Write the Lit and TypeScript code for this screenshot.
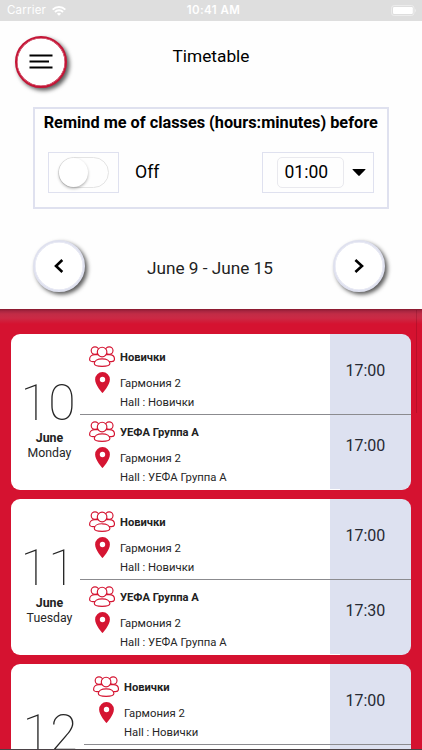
import { LitElement, html, svg, css } from "lit";
import { customElement, property } from "lit/decorators.js";
import { classMap } from "lit/directives/class-map.js";

interface Lesson {
  group: string;
  place: string;
  hall: string;
  time: string;
}
interface Day {
  date: string;
  month: string;
  weekday: string;
  wide?: boolean;
  lessons: Lesson[];
}

const lesson = (group: string, time: string): Lesson => ({
  group,
  place: "Гармония 2",
  hall: `Hall : ${group}`,
  time,
});

const DAYS: Day[] = [
  { date: "10", month: "June", weekday: "Monday", lessons: [lesson("Новички", "17:00"), lesson("УЕФА Группа А", "17:00")] },
  { date: "11", month: "June", weekday: "Tuesday", lessons: [lesson("Новички", "17:00"), lesson("УЕФА Группа А", "17:30")] },
  { date: "12", month: "June", weekday: "Wednesday", wide: true, lessons: [lesson("Новички", "17:00")] },
];

const people = svg`
  <circle cx="6" cy="4.6" r="3.8"/><circle cx="20.2" cy="4.6" r="3.8"/>
  <path d="M6.6 15.6H3.6C1.4 15.6.6 14.6.6 13.2.6 10.6 2.8 8.6 6 8.6H20.2C23.4 8.6 25.5 10.6 25.5 13.2 25.5 14.6 24.7 15.6 22.5 15.6H19.5"/>
  <circle cx="13.1" cy="6" r="4.8"/>
  <path d="M13.1 12.8C17.9 12.8 20.9 14.9 20.9 17.6 20.9 19.6 18.9 20.4 13.1 20.4S5.3 19.6 5.3 17.6C5.3 14.9 8.3 12.8 13.1 12.8Z"/>`;

@customElement("day-card")
class DayCard extends LitElement {
  @property({ attribute: false }) day!: Day;

  static styles = css`
    :host { display: block; }
    .card {
      position: relative;
      display: flex;
      height: 155.5px;
      border-radius: 9px;
      background: linear-gradient(90deg, #fff 319px, #dde1f0 319px);
      color: #262626;
    }
    .card::after {
      content: "";
      position: absolute;
      left: 309px;
      bottom: -0.5px;
      width: 20px;
      height: 1px;
      background: #fff;
    }
    .date {
      width: 69px;
      flex: none;
      box-sizing: border-box;
      padding: 40px 0 0 9px;
      display: flex;
      flex-direction: column;
      align-items: center;
      white-space: nowrap;
    }
    .wide .date { width: 73px; }
    .num { font-size: 50px; line-height: 58px; font-weight: 100; letter-spacing: 0.5px; margin-right: 2.5px; }
    .month { font-size: 12.4px; line-height: 14px; font-weight: 700; color: #222; margin: -1px 0 1px; }
    .week { font-size: 12.3px; line-height: 15px; }
    .list { flex: 1; min-width: 0; }
    .row {
      height: 75px;
      box-sizing: border-box;
      display: flex;
      padding-left: 9.5px;
    }
    .row:first-child { height: 80.5px; padding-top: 5.5px; border-bottom: 1px solid #8b8b8f; }
    .icons { width: 26px; margin-right: 5px; display: flex; flex-direction: column; align-items: center; padding-top: 6.5px; gap: 4.5px; }
    .icons svg { display: block; flex: none; }
    .text { flex: 1; font-size: 11.3px; white-space: nowrap; }
    .group { font-size: 11.2px; font-weight: 700; line-height: 14px; margin-top: 11px; color: #222; }
    .place { line-height: 14px; margin-top: 12px; }
    .hall { line-height: 14px; margin-top: 5px; }
    .time { width: 65.5px; font-size: 16px; line-height: 20px; padding-top: 21px; color: #262a33; }
  `;

  render() {
    const d = this.day;
    return html`<div class=${classMap({ card: true, wide: !!d.wide })}>
      <div class="date">
        <div class="num">${d.date}</div>
        <div class="month">${d.month}</div>
        <div class="week">${d.weekday}</div>
      </div>
      <div class="list">
        ${d.lessons.map(
          (l) => html`<div class="row">
            <div class="icons">
              <svg width="26" height="21" viewBox="0 0 26 21" fill="#fff" stroke="#d51532" stroke-width="1.15">${people}</svg>
              <svg width="15" height="21" viewBox="0 0 15 21"><path fill="#d51532" fill-rule="evenodd" d="M7.5 0A7.4 7.4 0 0 0 .1 7.4C.1 13 7.5 21 7.5 21S14.9 13 14.9 7.4A7.4 7.4 0 0 0 7.5 0Zm0 4.8a2.7 2.7 0 1 1 0 5.4 2.7 2.7 0 0 1 0-5.4Z"/></svg>
            </div>
            <div class="text">
              <div class="group">${l.group}</div>
              <div class="place">${l.place}</div>
              <div class="hall">${l.hall}</div>
            </div>
            <div class="time">${l.time}</div>
          </div>`
        )}
      </div>
    </div>`;
  }
}

@customElement("app-root")
class AppRoot extends LitElement {
  static styles = css`
    :host {
      display: flex;
      flex-direction: column;
      position: relative;
      height: 750px;
      overflow: hidden;
      background: #d51230;
      font-family: Roboto, "Liberation Sans", sans-serif;
      color: #000;
    }
    .status {
      height: 21px;
      flex: none;
      background: #dedede;
      color: #fff;
      display: grid;
      grid-template-columns: 1fr auto 1fr;
      align-items: center;
      font: 11.5px/21px Inter, Roboto, sans-serif;
    }
    .carrier { display: flex; align-items: center; gap: 6px; padding-left: 7px; letter-spacing: 0.2px; }
    .clock { font-weight: 600; letter-spacing: 0.45px; padding-left: 5px; }
    .battery { justify-self: end; margin-right: 5px; display: block; }
    .head { height: 288px; flex: none; background: #fefefe; }
    .top { display: grid; grid-template-columns: 1fr auto 1fr; padding: 14.5px 15px 0 15px; height: 71.5px; }
    .round {
      width: 52px;
      height: 52px;
      box-sizing: border-box;
      border-radius: 50%;
      border: 2px solid #dfe1ef;
      background: #fff;
      display: flex;
      align-items: center;
      justify-content: center;
      box-shadow: 2.5px 2.5px 4px rgba(0, 0, 0, 0.65), inset 0 0 0 0.5px #dfe1ef;
    }
    .menu { border-color: #c41536; box-shadow: 2.5px 2.5px 4px rgba(0, 0, 0, 0.65), inset 0 0 0 0.5px #c41536; }
    .title { font-size: 17.3px; line-height: 22px; padding-top: 9px; }
    .remind {
      margin: 0 33.5px 0 33px;
      height: 102px;
      box-sizing: border-box;
      border: 2px solid #dfe1ef;
    }
    .label { font-size: 16.3px; line-height: 20px; font-weight: 700; text-align: center; padding-top: 4px; white-space: nowrap; }
    .controls { display: flex; align-items: center; padding: 0 13px; margin-top: 19px; }
    .frame { box-sizing: border-box; height: 41px; border: 1px solid #dfe1ef; display: flex; align-items: center; }
    .switch { width: 71px; padding-left: 9px; }
    .track { width: 51px; height: 31px; box-sizing: border-box; border: 1.5px solid #e4e4e4; border-radius: 16px; }
    .knob { width: 29px; height: 29px; margin: -0.5px; border-radius: 50%; background: #fff; box-shadow: 0 1.5px 3px rgba(0, 0, 0, 0.3); }
    .off { font-size: 17.7px; line-height: 22px; margin: -1px 0 0 16px; flex: 1; }
    .select { width: 112px; padding-left: 14px; gap: 8px; }
    .value { width: 67px; height: 31px; box-sizing: border-box; border: 1px solid #e9e9ee; border-radius: 5px; font-size: 17.5px; line-height: 29px; padding-left: 7px; }
    .nav { display: flex; justify-content: space-between; align-items: center; padding: 0 37px 0 33px; margin-top: 30.5px; }
    .range { font-size: 17.2px; line-height: 22px; padding: 5px 0 0 2px; color: #222; }
    .days {
      flex: 1;
      min-height: 0;
      overflow: hidden;
      display: flex;
      flex-direction: column;
      gap: 9.5px;
      padding: 25px 11px 0 10.5px;
      background: linear-gradient(#85182c, #a82540 2px, #c22c46 5px, #cb2a45 9px, #d51230 15px);
    }
    .scroll { position: absolute; right: 5px; top: 310px; width: 1px; height: 103px; background: rgba(90, 0, 20, 0.22); }
    .edge { position: absolute; left: 0; right: 0; bottom: 0; height: 1px; background: #4a4246; }
  `;

  render() {
    return html`
      <div class="status">
        <div class="carrier">
          <span>Carrier</span>
          <svg width="14" height="10" viewBox="0 0 14 10" fill="none" stroke="#fff" stroke-width="2"><path d="M.7 3.6a9 9 0 0 1 12.6 0M3 6a5.7 5.7 0 0 1 8 0"/><path d="M7 9.8 4.9 7.7a3 3 0 0 1 4.2 0Z" fill="#fff" stroke="none"/></svg>
        </div>
        <div class="clock">10:41 AM</div>
        <svg class="battery" width="26" height="11" viewBox="0 0 26 11"><rect x=".5" y=".5" width="22.5" height="10" rx="2.6" fill="none" stroke="#ececec"/><rect x="2" y="2" width="19.8" height="7" rx="1.2" fill="#fff"/><path d="M24 3.7q2 1.8 0 3.6Z" fill="#ececec"/></svg>
      </div>
      <div class="head">
        <div class="top">
          <div class="round menu">
            <svg width="24" height="16" viewBox="0 0 24 16"><path d="M.5 1.5h23M.5 7.5h19.5M.5 13.5h23" stroke="#000" stroke-width="2.2"/></svg>
          </div>
          <div class="title">Timetable</div>
        </div>
        <div class="remind">
          <div class="label">Remind me of classes (hours:minutes) before</div>
          <div class="controls">
            <div class="frame switch"><div class="track"><div class="knob"></div></div></div>
            <div class="off">Off</div>
            <div class="frame select">
              <div class="value">01:00</div>
              <svg width="14" height="7" viewBox="0 0 14 7"><path d="M1 0h12q1 0 .3.8L7.7 6.6q-.7.6-1.4 0L.7.8Q0 0 1 0Z"/></svg>
            </div>
          </div>
        </div>
        <div class="nav">
          <div class="round"><svg width="10" height="14" viewBox="0 0 10 14" fill="none" stroke="#000" stroke-width="2.6"><path d="M8.3 1 2 7l6.3 6"/></svg></div>
          <div class="range">June 9 - June 15</div>
          <div class="round"><svg width="10" height="14" viewBox="0 0 10 14" fill="none" stroke="#000" stroke-width="2.6"><path d="M1.4 1 8 7l-6.6 6"/></svg></div>
        </div>
      </div>
      <div class="days">${DAYS.map((d) => html`<day-card .day=${d}></day-card>`)}</div>
      <div class="scroll"></div>
      <div class="edge"></div>
    `;
  }
}
